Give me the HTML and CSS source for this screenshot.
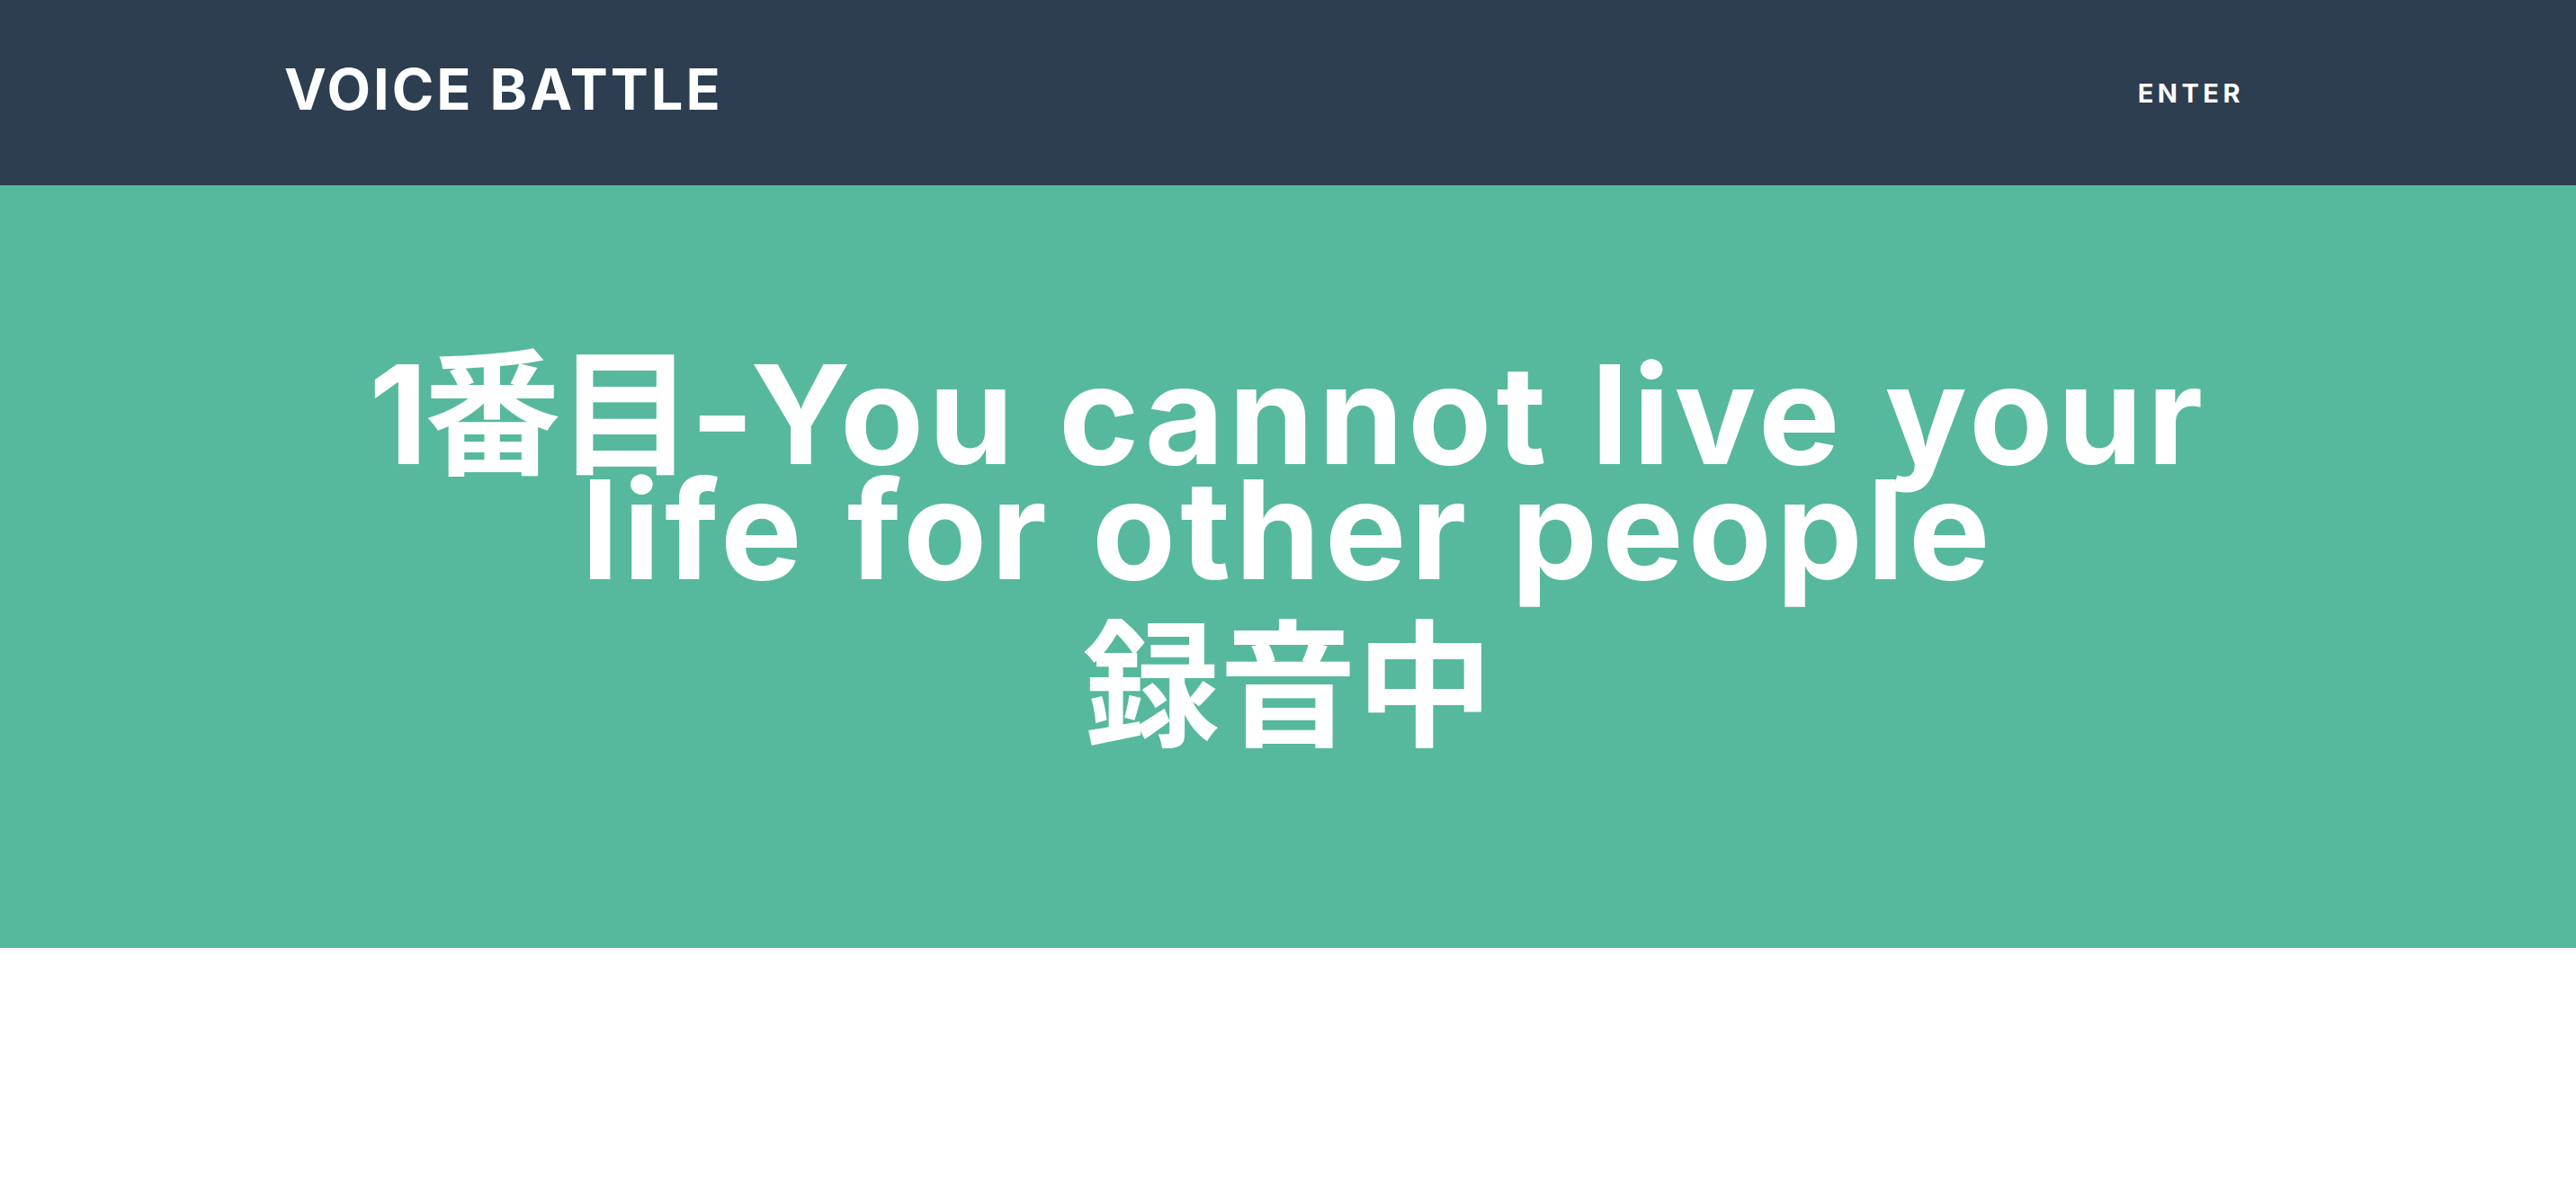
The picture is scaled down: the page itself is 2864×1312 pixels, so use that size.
FILE: index.html
```html
<!DOCTYPE html>
<html lang="ja">
<head>
<meta charset="utf-8">
<title>VOICE BATTLE</title>
<link rel="stylesheet" href="styles.css">
</head>
<body>
<header class="navbar">
  <a class="brand" href="#">VOICE BATTLE</a>
  <nav class="nav"><a class="nav-link" href="#">ENTER</a></nav>
</header>
<section class="hero">
  <h1 class="title"><span class="title-num">1番目-</span>You cannot live your<br>life for other people</h1>
  <p class="status">録音中</p>
</section>
</body>
</html>
```

FILE: styles.css
```css
* { box-sizing: border-box; }
html, body { margin: 0; padding: 0; background: #ffffff; }
body { font-family: Inter, "Noto Sans CJK JP", sans-serif; color: #ffffff; }

.navbar {
  height: 206px;
  background: #2c3e50;
  display: flex;
  align-items: center;
  justify-content: space-between;
  padding: 0 369px 0 316px;
}
.brand {
  color: #ffffff;
  text-decoration: none;
  font-weight: 700;
  font-size: 63px;
  letter-spacing: 3px;
  line-height: 1;
  margin-top: -8px;
}
.nav-link {
  color: #ffffff;
  text-decoration: none;
  font-weight: 700;
  font-size: 29px;
  letter-spacing: 4.5px;
  line-height: 1;
  margin-top: -22px;
}

.hero {
  background: #56b99d;
  padding: 191px 0 203px;
  text-align: center;
}
.title {
  margin: 0;
  font-size: 152px;
  font-weight: 700;
  line-height: 128px;
  letter-spacing: 5px;
  word-spacing: 4px;
}
.title-num {
  letter-spacing: -4px;
}
.status {
  margin: 23px 0 0;
  font-size: 152px;
  font-weight: 700;
  line-height: 175px;
}
```
